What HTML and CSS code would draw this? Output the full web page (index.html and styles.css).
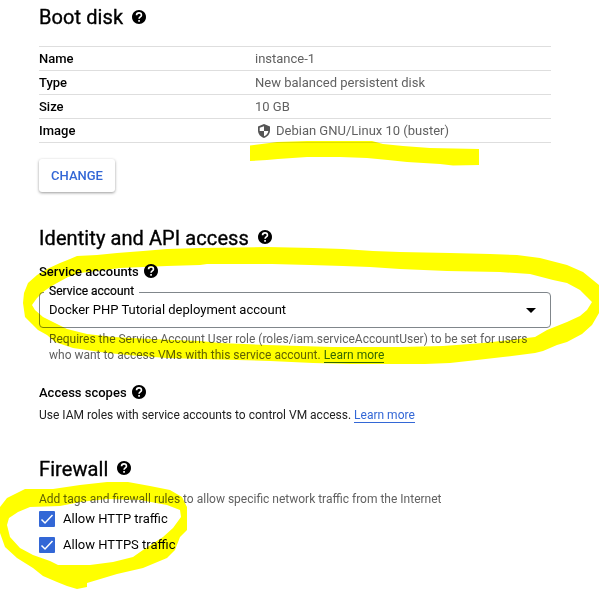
FILE: index.html
```html
<!DOCTYPE html>
<html lang="en">
<head>
<meta charset="utf-8">
<title>Create an instance</title>
<link rel="stylesheet" href="styles.css">
</head>
<body>
<svg class="defs" width="0" height="0" aria-hidden="true">
  <symbol id="help" viewBox="0 0 24 24"><path d="M12 0C5.400 0 0 5.400 0 12s5.400 12 12 12 12-5.400 12-12S18.600 0 12 0z"/><path class="mark" d="M7.800 9.200C7.800 6.600 9.600 5 12 5s4.200 1.600 4.200 3.900c0 2.900-4.100 3.200-4.100 6.300M12.100 17v3"/></symbol>
</svg>
<main class="form">
  <h2 class="title t-boot"><span>Boot disk</span><svg class="help"><use href="#help"/></svg></h2>
  <dl class="table">
    <div class="row"><dt>Name</dt><dd>instance-1</dd></div>
    <div class="row"><dt>Type</dt><dd>New balanced persistent disk</dd></div>
    <div class="row"><dt>Size</dt><dd>10 GB</dd></div>
    <div class="row"><dt>Image</dt><dd class="image"><svg class="shield" viewBox="0 0 12 14"><path fill-rule="evenodd" d="M6 0L0 2.400v4.200C0 10 2.500 13.100 6 14c3.500-.9 6-4 6-7.400V2.400zM6 2.200V7h4.300c-.3 2.500-2 4.600-4.300 5.300V7H1.700V3.700z"/></svg><span>Debian GNU/Linux 10 (buster)</span></dd></div>
  </dl>
  <button class="change">CHANGE</button>

  <h2 class="title t-identity"><span>Identity and API access</span><svg class="help"><use href="#help"/></svg></h2>
  <h3 class="subtitle s-accounts"><span>Service accounts</span><svg class="help"><use href="#help"/></svg></h3>
  <div class="select">
    <span class="label">Service account</span>
    <span class="value">Docker PHP Tutorial deployment account</span>
    <svg class="arrow" viewBox="0 0 10 5"><path d="M0 0h10L5 5z"/></svg>
  </div>
  <p class="hint">Requires the Service Account User role (roles/iam.serviceAccountUser) to be set for users<br>who want to access VMs with this service account. <a href="#">Learn more</a></p>
  <h3 class="subtitle s-scopes"><span>Access scopes</span><svg class="help"><use href="#help"/></svg></h3>
  <p class="scopes">Use IAM roles with service accounts to control VM access. <a href="#">Learn more</a></p>

  <h2 class="title t-firewall"><span>Firewall</span><svg class="help"><use href="#help"/></svg></h2>
  <p class="rules">Add tags and firewall rules to allow specific network traffic from the Internet</p>
  <div class="check"><svg class="box" viewBox="0 0 16 16"><path d="M2.500 8.500l3.500 3.500 7.500-8"/></svg><span>Allow HTTP traffic</span></div>
  <div class="check"><svg class="box" viewBox="0 0 16 16"><path d="M2.500 8.500l3.500 3.500 7.500-8"/></svg><span>Allow HTTPS traffic</span></div>
</main>
<svg class="marker" viewBox="0 0 599 589" aria-hidden="true">
  <path d="M250 145.500L277 142 307 141H372L383 144 403 146 430 148 479 149V165L453 165.500 440 164 407 162 388 160 367 158 340 157 307 157 278 159 267 160 250 161z"/>
  <path d="M200 248L167 249 143 251 117 253 97 255 77 256 70 259 60 263 47 269 37 275 28 283 24 293 23 303 25 317 32 324 38 330 47 335 55 342 73 348 100 352 127 355 167 358 200 359 270 361 313 363 350 364 400 364 425 364 450 363 477 360 503 357 535 353 543 351 557 345 567 342 582 334 592 325 599 313V285L583 272 567 265 540 258 517 255 490 254 450 253 400 252 373 251 343 249 313 248 267 247zM200 265L167 266 143 267 120 268 97 271 80 273 68 277 57 283 50 287 43 292 37 298 32 305 35 310 43 317 55 323 67 329 87 334 113 337 150 339 200 341 220 343 267 345 333 347 400 347 443 346 483 343 510 340 535 337 547 330 567 322 580 316 587 310 592 302 587 297 580 290 567 283 553 280 530 274 500 272 447 271 400 269 370 267 343 266 310 265 272 264 207 264z"/>
  <path d="M0 507L7 498 25 489 53 489 80 485 107 482 128 482 150 486 170 490 182 497 187 507V530L180 537 175 550 167 558 143 568 117 574 87 583V587L77 589 67 586 57 582 43 576 33 568 17 558 5 547 0 533zM7 525L9 518 18 512 30 507 60 506 80 502 107 499 140 500 167 505 180 510 181 517 173 528 163 537 143 550 133 557 113 562 90 565 58 565 50 561 33 555 20 548 10 537z"/>
</svg>
</body>
</html>
```
FILE: styles.css
```css
* { box-sizing: border-box; }
body {
  margin: 0;
  height: 589px;
  overflow: hidden;
  background: #fff;
  color: #000;
  font: 400 13px/16px Roboto, "Liberation Sans", sans-serif;
}
h2, h3, p, dl, dt, dd { margin: 0; }
.defs { position: absolute; }
.form { width: 512px; margin-left: 39px; }

.title { display: flex; align-items: center; gap: 9px; height: 34px; font-size: 20px; line-height: 34px; font-weight: 400; letter-spacing: .08px; -webkit-text-stroke: .35px; }
.subtitle { display: flex; align-items: center; gap: 5px; height: 20px; font-size: 13px; font-weight: 500; }
.help { width: 14px; height: 14px; flex: none; }
.mark { fill: none; stroke: #fff; stroke-width: 2.800; }

.table { margin-top: 12px; border-top: 1px solid #dedede; }
.row { display: grid; grid-template-columns: 216px 1fr; height: 24px; line-height: 23px; border-bottom: 1px solid #dedede; }
.row dt { font-weight: 500; }
.row dd { color: #616161; }
.image { display: flex; align-items: center; gap: 6px; padding-left: 3px; }
.shield { width: 12px; height: 14px; fill: #555; }

.change {
  display: block;
  width: 76px;
  height: 33px;
  margin-top: 16px;
  padding: 0;
  border: 0;
  border-radius: 3px;
  background: #fff;
  color: #3367d6;
  font: 500 13px/33px Roboto, sans-serif;
  box-shadow: 0 1px 3px rgba(0, 0, 0, .4);
}

.t-identity { margin-top: 29px; }
.t-identity .help { margin-bottom: 2px; }
.s-accounts { margin-top: 6px; }
.s-accounts span { padding-top: 1px; }
.select { position: relative; display: flex; align-items: center; justify-content: space-between; height: 36px; margin-top: 11px; padding: 0 14px 0 9px; border: 1px solid #80868b; border-radius: 4px; }
.label { position: absolute; left: 4px; top: -10px; padding: 0 5px; background: #fff; font-size: 12px; -webkit-text-stroke: .2px; }
.arrow { width: 10px; height: 5px; }
.hint { margin-top: 3px; padding-left: 10px; color: #616161; font-size: 12px; white-space: nowrap; }
a { color: #3367d6; text-decoration: none; border-bottom: 1px solid #3367d6; }
.s-scopes { margin-top: 20px; }
.s-scopes .help { margin-bottom: 2px; }
.scopes { margin-top: 4px; font-size: 12px; color: #212121; }

.t-firewall { margin-top: 28px; }
.t-firewall span { padding-top: 2px; }
.rules { margin-top: 6px; margin-bottom: -1px; font-size: 12px; color: #616161; }
.check { display: flex; align-items: center; gap: 8px; height: 26px; }
.box { width: 16px; height: 16px; border-radius: 1px; background: #3367d6; fill: none; stroke: #fff; stroke-width: 1.500; }

.marker { position: absolute; left: 0; top: 0; width: 599px; height: 589px; mix-blend-mode: multiply; pointer-events: none; fill: #ff0; fill-rule: evenodd; }
```
